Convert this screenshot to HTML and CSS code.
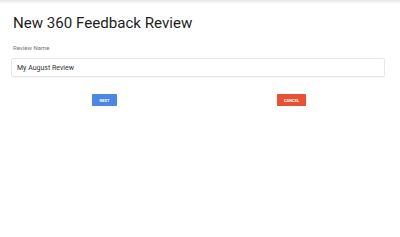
FILE: index.html
```html
<!DOCTYPE html>
<html lang="en">

<head>
    <meta charset="UTF-8">
    <meta name="viewport" content="width=device-width, initial-scale=1.0">
    <title>New 360 Feedback Review</title>
    <link rel="stylesheet" href="styles.css">
</head>

<body>
    <div class="topbar"></div>
    <div class="page">
        <h1>New 360 Feedback Review</h1>
        <div class="field">
            <label for="name">Review Name</label>
            <input type="text" id="name" value="My August Review">
        </div>
        <div class="actions">
            <div class="col">
                <button class="next">NEXT</button>
            </div>
            <div class="col">
                <button class="cancel">CANCEL</button>
            </div>
        </div>
    </div>
</body>

</html>
```

FILE: styles.css
```css
* {
    padding: 0;
    margin: 0;
    box-sizing: border-box;
}

body {
    font-family: Roboto, "Liberation Sans", sans-serif;
    background: #fff;
    color: #222;
}

.topbar {
    height: 4px;
    background: linear-gradient(#e6e6e6, #fff);
}

.page {
    padding: 0 15px 0 11px;
}

h1 {
    font-size: 15.1px;
    font-weight: 400;
    margin: 9px 0 0 2px;
    line-height: 20px;
    color: #1e1e1e;
}

.field {
    margin-top: 11px;
}

.field label {
    display: block;
    font-size: 6px;
    color: #777;
    margin-left: 2px;
    line-height: 8px;
}

.field input {
    display: block;
    width: 100%;
    height: 19px;
    margin-top: 6px;
    border: 1px solid #e8e8e8;
    border-radius: 2px;
    padding: 0 5px;
    font-family: Roboto, "Liberation Sans", sans-serif;
    font-size: 7px;
    color: #333;
    box-shadow: 0 1px 1px rgba(0, 0, 0, 0.04);
}

.actions {
    display: flex;
    margin-top: 17px;
}

.col {
    flex: 1;
    display: flex;
    justify-content: center;
}

button {
    border: none;
    height: 12px;
    color: #fff;
    font-family: Roboto, "Liberation Sans", sans-serif;
    font-size: 4px;
    font-weight: bold;
    border-radius: 1px;
    box-shadow: 0 1px 1px rgba(0, 0, 0, 0.2);
}

.next {
    width: 25px;
    background: #4a87e6;
}

.cancel {
    width: 29px;
    background: #ea5033;
}
```
